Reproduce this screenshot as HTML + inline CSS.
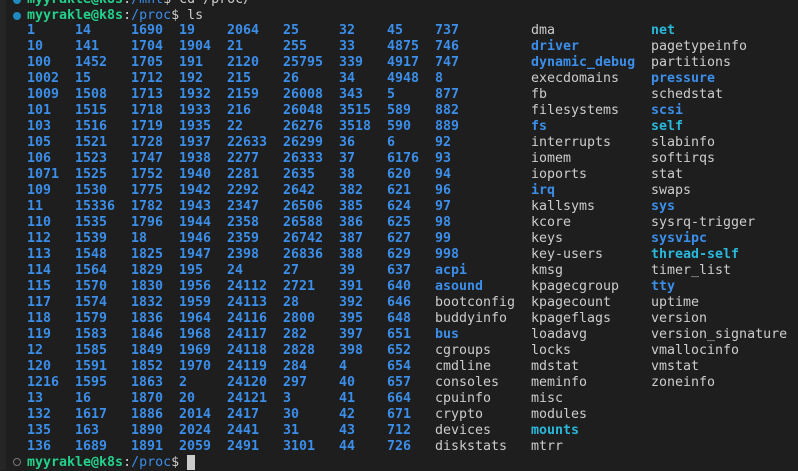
<!DOCTYPE html><html><head><style>
body{margin:0;width:798px;height:470px;background:#1e1e1e;overflow:hidden;position:relative;font-family:"DejaVu Sans Mono","Liberation Mono",monospace;font-size:13.3px;}
.strip{position:absolute;left:0;top:0;width:6px;height:470px;background:#252526}
.col{position:absolute;top:23px;line-height:16px;white-space:pre;color:#3b8eea;font-weight:bold}
.g{color:#cccccc;font-weight:normal}
.c{color:#29b8db;font-weight:bold}
.b{color:#3b8eea;font-weight:bold}
.line{position:absolute;left:27px;line-height:16px;white-space:pre;color:#cccccc}
.p{color:#23d18b;font-weight:bold}
.u{color:#3b8eea}
.dot{position:absolute;left:13px;width:8px;height:8px;border-radius:50%;background:#1f8ac0}
</style></head><body>
<div class="strip"></div>
<div class="dot" style="top:-4px"></div>
<div class="line" style="top:-8px"><span class="p">myyrakle@k8s</span>:<span class="u">/mnt</span>$ cd /proc/</div>
<div class="dot" style="top:12px"></div>
<div class="line" style="top:8px"><span class="p">myyrakle@k8s</span>:<span class="u">/proc</span>$ ls</div>
<div class="col" style="left:27px">1
10
100
1002
1009
101
103
105
106
1071
109
11
110
112
113
114
115
117
118
119
12
120
1216
13
132
135
136</div>
<div class="col" style="left:75px">14
141
1452
15
1508
1515
1516
1521
1523
1525
1530
15336
1535
1539
1548
1564
1570
1574
1579
1583
1585
1591
1595
16
1617
163
1689</div>
<div class="col" style="left:131px">1690
1704
1705
1712
1713
1718
1719
1728
1747
1752
1775
1782
1796
18
1825
1829
1830
1832
1836
1846
1849
1852
1863
1870
1886
1890
1891</div>
<div class="col" style="left:179px">19
1904
191
192
1932
1933
1935
1937
1938
1940
1942
1943
1944
1946
1947
195
1956
1959
1964
1968
1969
1970
2
20
2014
2024
2059</div>
<div class="col" style="left:227px">2064
21
2120
215
2159
216
22
22633
2277
2281
2292
2347
2358
2359
2398
24
24112
24113
24116
24117
24118
24119
24120
24121
2417
2441
2491</div>
<div class="col" style="left:283px">25
255
25795
26
26008
26048
26276
26299
26333
2635
2642
26506
26588
26742
26836
27
2721
28
2800
282
2828
284
297
3
30
31
3101</div>
<div class="col" style="left:339px">32
33
339
34
343
3515
3518
36
37
38
382
385
386
387
388
39
391
392
395
397
398
4
40
41
42
43
44</div>
<div class="col" style="left:387px">45
4875
4917
4948
5
589
590
6
6176
620
621
624
625
627
629
637
640
646
648
651
652
654
657
664
671
712
726</div>
<div class="col" style="left:435px">737
746
747
8
877
882
889
92
93
94
96
97
98
99
998
acpi
asound
<span class="g">bootconfig</span>
<span class="g">buddyinfo</span>
bus
<span class="g">cgroups</span>
<span class="g">cmdline</span>
<span class="g">consoles</span>
<span class="g">cpuinfo</span>
<span class="g">crypto</span>
<span class="g">devices</span>
<span class="g">diskstats</span></div>
<div class="col g" style="left:531px"><span class="g">dma</span>
<span class="b">driver</span>
<span class="b">dynamic_debug</span>
execdomains
fb
filesystems
<span class="b">fs</span>
interrupts
iomem
ioports
<span class="b">irq</span>
kallsyms
kcore
keys
key-users
kmsg
kpagecgroup
kpagecount
kpageflags
loadavg
locks
mdstat
meminfo
misc
modules
<span class="c">mounts</span>
mtrr</div>
<div class="col g" style="left:651px"><span class="c">net</span>
pagetypeinfo
partitions
<span class="b">pressure</span>
schedstat
<span class="b">scsi</span>
<span class="c">self</span>
slabinfo
softirqs
stat
swaps
<span class="b">sys</span>
sysrq-trigger
<span class="b">sysvipc</span>
<span class="c">thread-self</span>
timer_list
<span class="b">tty</span>
uptime
version
version_signature
vmallocinfo
vmstat
zoneinfo</div>
<div style="position:absolute;left:13px;top:458px;width:6px;height:6px;border-radius:50%;border:1px solid #777"></div>
<div class="line" style="top:455px"><span class="p">myyrakle@k8s</span>:<span class="u">/proc</span>$ </div>
<div style="position:absolute;left:187px;top:455px;width:8px;height:15px;background:#cccccc"></div>
</body></html>
